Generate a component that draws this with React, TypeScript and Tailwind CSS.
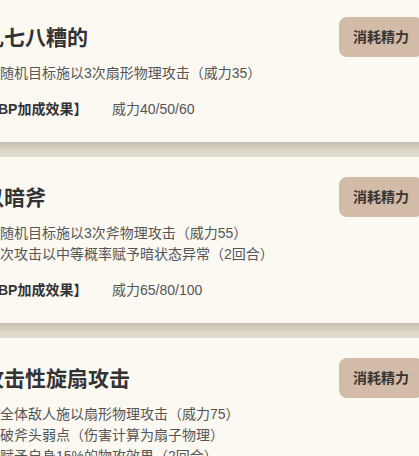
const skills = [
  {
    name: '乱七八糟的',
    lines: ['对随机目标施以3次扇形物理攻击（威力35）'],
    bp: '威力40/50/60',
  },
  {
    name: '以暗斧',
    lines: ['对随机目标施以3次斧物理攻击（威力55）', '每次攻击以中等概率赋予暗状态异常（2回合）'],
    bp: '威力65/80/100',
  },
  {
    name: '攻击性旋扇攻击',
    lines: ['对全体敌人施以扇形物理攻击（威力75）', '击破斧头弱点（伤害计算为扇子物理）', '并赋予自身15%的物攻效果（2回合）'],
    bp: '威力80/95/110',
  },
];

function SkillCard({ skill }: { skill: (typeof skills)[number] }) {
  return (
    <div className="relative bg-[#fcf9f3] px-5 pt-5 pb-[22px] shadow-[0_5px_10px_rgba(90,75,55,0.28)]">
      <div className="flex items-center justify-between h-10">
        <h2 className="text-[21px] leading-none font-bold text-[#333] whitespace-nowrap">
          {skill.name}
        </h2>
        <button className="h-10 w-[84px] rounded-lg bg-[#d2bba7] text-[14px] font-bold text-[#3b3530]">
          消耗精力
        </button>
      </div>
      <div className="mt-[6px] ml-[3px] text-[14px] leading-[21px] text-[#555] whitespace-nowrap">
        {skill.lines.map((line) => (
          <p key={line}>{line}</p>
        ))}
      </div>
      <div className="mt-[15px] ml-[1px] flex text-[14px] leading-[21px] whitespace-nowrap">
        <span className="w-[128px] font-bold text-[#333]">【BP加成效果】</span>
        <span className="text-[#555]">{skill.bp}</span>
      </div>
    </div>
  );
}

export default function App() {
  return (
    <div
      className="w-[419px] h-[456px] overflow-hidden bg-[#e8e1d6]"
      style={{ fontFamily: '"Liberation Sans", "Noto Sans CJK SC", sans-serif' }}
    >
      <div className="-mt-[3px] -ml-[37px] w-[480px] flex flex-col gap-[15px]">
        {skills.map((s) => (
          <SkillCard key={s.name} skill={s} />
        ))}
      </div>
    </div>
  );
}
